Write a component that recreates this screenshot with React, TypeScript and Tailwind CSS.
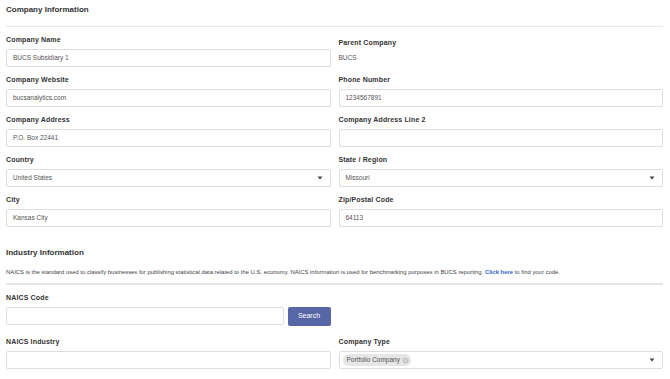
import React from "react";

const Label = ({ children }: { children: React.ReactNode }) => (
  <div className="h-[10px] leading-[10px] text-[7px] font-bold tracking-[0.15px] text-[#333]">{children}</div>
);

const Field = ({ value = "" }: { value?: string }) => (
  <div className="mt-[4px] h-[18px] w-full border border-[#dedede] rounded-[2px] px-[6px] flex items-center text-[6.5px] text-[#555] bg-white">
    {value}
  </div>
);

const Caret = () => (
  <svg width="6" height="4" viewBox="0 0 6 4" className="shrink-0">
    <path d="M0.5 0.5 L5.5 0.5 L3 3.5 Z" fill="#444" />
  </svg>
);

const Select = ({ value }: { value: string }) => (
  <div className="mt-[4px] h-[18px] w-full border border-[#dedede] rounded-[2px] pl-[6px] pr-[7px] flex items-center justify-between text-[6.5px] text-[#555] bg-white">
    <span>{value}</span>
    <Caret />
  </div>
);

const Cell = ({ label, children }: { label: string; children: React.ReactNode }) => (
  <div className="flex flex-col">
    <Label>{label}</Label>
    {children}
  </div>
);

export default function App() {
  return (
    <div className="w-[670px] h-[379px] bg-white overflow-hidden font-['Liberation_Sans',Arial,sans-serif] pl-[6px] pr-[7px] pt-[4px]">
      <div className="h-[12px] leading-[12px] text-[8px] font-bold text-[#333]">Company Information</div>
      <div className="mt-[10px] h-px bg-[#e6e6e6]" />
      <div className="mt-[8px] grid grid-cols-2 gap-x-[8px] gap-y-[8px]">
        <Cell label="Company Name">
          <Field value="BUCS Subsidiary 1" />
        </Cell>
        <div className="pt-[3px] flex flex-col">
          <Label>Parent Company</Label>
          <div className="mt-[4px] h-[12px] leading-[12px] text-[6.5px] text-[#555]">BUCS</div>
        </div>
        <Cell label="Company Website">
          <Field value="bucsanalytics.com" />
        </Cell>
        <Cell label="Phone Number">
          <Field value="1234567891" />
        </Cell>
        <Cell label="Company Address">
          <Field value="P.O. Box 22441" />
        </Cell>
        <Cell label="Company Address Line 2">
          <Field />
        </Cell>
        <Cell label="Country">
          <Select value="United States" />
        </Cell>
        <Cell label="State / Region">
          <Select value="Missouri" />
        </Cell>
        <Cell label="City">
          <Field value="Kansas City" />
        </Cell>
        <Cell label="Zip/Postal Code">
          <Field value="64113" />
        </Cell>
      </div>
      <div className="mt-[20px] h-[12px] leading-[12px] text-[8px] font-bold text-[#333]">Industry Information</div>
      <div className="mt-[9px] h-[8px] leading-[8px] text-[5.9px] text-[#444] whitespace-nowrap">
        NAICS is the standard used to classify businesses for publishing statistical data related to the U.S. economy. NAICS information is used for benchmarking purposes in BUCS reporting.{" "}
        <span className="font-bold text-[#2f62d6]">Click here</span> to find your code.
      </div>
      <div className="mt-[7px] h-[2px] bg-[#e6e6e6]" />
      <div className="mt-[8px] grid grid-cols-2 gap-x-[8px]">
        <Cell label="NAICS Code">
          <div className="mt-[4px] flex gap-[4px]">
            <div className="h-[18px] flex-1 border border-[#dedede] rounded-[2px] bg-white" />
            <div className="h-[19px] w-[43px] rounded-[2px] bg-[#5666a6] text-white text-[7px] flex items-center justify-center">
              Search
            </div>
          </div>
        </Cell>
        <div />
      </div>
      <div className="mt-[11px] grid grid-cols-2 gap-x-[8px]">
        <Cell label="NAICS Industry">
          <Field />
        </Cell>
        <Cell label="Company Type">
          <div className="mt-[4px] h-[18px] w-full border border-[#dedede] rounded-[2px] pl-[3px] pr-[7px] flex items-center justify-between bg-white">
            <div className="h-[12px] rounded-full bg-[#e6e6e6] pl-[4px] pr-[2px] flex items-center gap-[2px] text-[6.5px] text-[#555]">
              <span>Portfolio Company</span>
              <svg width="7" height="7" viewBox="0 0 8 8">
                <circle cx="4" cy="4" r="3.5" fill="#c4c4c4" />
                <path d="M2.6 2.6 L5.4 5.4 M5.4 2.6 L2.6 5.4" stroke="#eee" strokeWidth="0.9" />
              </svg>
            </div>
            <Caret />
          </div>
        </Cell>
      </div>
    </div>
  );
}
